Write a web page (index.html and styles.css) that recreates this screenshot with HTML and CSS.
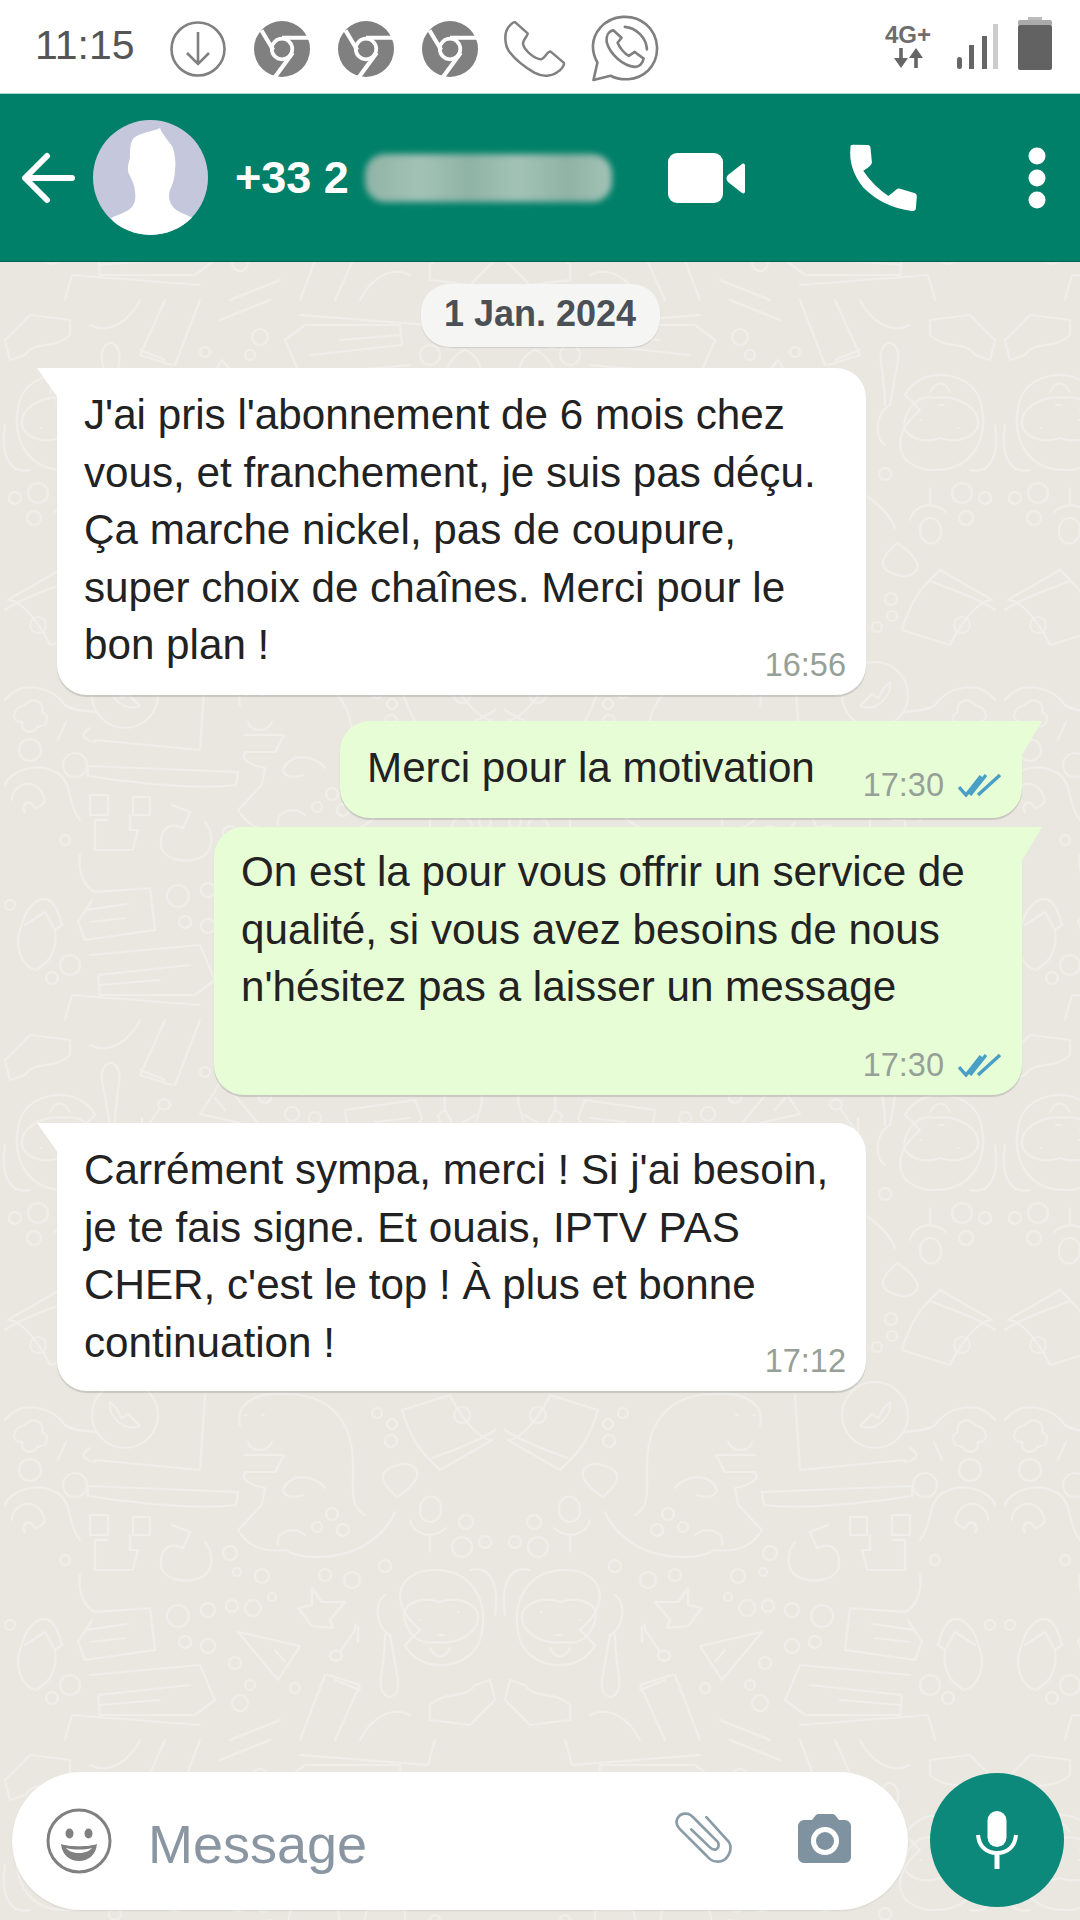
FILE: index.html
```html
<!DOCTYPE html>
<html lang="fr">
<head>
<meta charset="utf-8">
<title>WhatsApp</title>
<link rel="stylesheet" href="styles.css">
</head>
<body>
<div class="phone">
  <div class="status">
    <span class="clock">11:15</span>
    <div class="notifs">
      <svg class="n-dl" viewBox="0 0 56 56"><circle cx="28" cy="28" r="26.5" fill="none" stroke="#808080" stroke-width="2.6"/><path d="M28 11V43M17 32L28 43L39 32" fill="none" stroke="#808080" stroke-width="2.6"/></svg>
      <svg class="n-ch" viewBox="0 0 60 60"><use href="#chrome"/></svg>
      <svg class="n-ch" viewBox="0 0 60 60"><use href="#chrome"/></svg>
      <svg class="n-ch" viewBox="0 0 60 60"><use href="#chrome"/></svg>
      <svg class="n-ph" viewBox="74 61 186 172"><path d="M108 67L145 100C148 104 130 120 131 132C135 150 165 178 185 178C195 178 205 152 214 155L253 188C256 192 250 205 240 212C220 230 190 232 165 218C135 200 105 175 90 155C75 135 75 100 85 85C92 75 100 65 108 67Z" fill="none" stroke="#808080" stroke-width="7.5" stroke-linejoin="round"/></svg>
      <svg class="n-wa" viewBox="333 46 205 203"><path d="M352 190L340 243L392 230C420 245 470 248 505 215C545 175 540 110 500 75C460 40 395 45 360 85C330 120 335 160 352 190Z" fill="none" stroke="#808080" stroke-width="8" stroke-linejoin="round"/><path d="M435 82C470 85 500 115 502 150" fill="none" stroke="#808080" stroke-width="8" stroke-linecap="round"/><path d="M400 92C385 95 378 110 380 128C390 165 430 200 465 203C480 205 490 190 492 178L465 158L447 170C430 160 420 145 413 130L425 115Z" fill="none" stroke="#808080" stroke-width="8" stroke-linejoin="round"/></svg>
    </div>
    <div class="sys">
      <div class="net">
        <span class="net-label">4G+</span>
        <svg class="net-arrows" viewBox="0 0 34 20"><path d="M10 0V14M25 20V6" fill="none" stroke="#666" stroke-width="3.6"/><path d="M3 10H17L10 20ZM18 10H32L25 0Z" fill="#666"/></svg>
      </div>
      <svg class="signal" viewBox="0 0 44 46"><rect x="2" y="33" width="5" height="12" rx="2.5" fill="#666"/><rect x="14" y="21" width="5" height="24" fill="#666"/><rect x="27" y="12" width="5" height="33" fill="#666"/><rect x="38" y="0" width="5" height="45" fill="#ccc"/></svg>
      <svg class="battery" viewBox="0 0 34 53"><rect x="10" y="0" width="14" height="4" fill="#bbb"/><rect x="0" y="3" width="34" height="6" rx="2" fill="#aaa"/><rect x="0" y="8" width="34" height="45" rx="2" fill="#626262"/></svg>
    </div>
  </div>

  <header class="bar">
    <svg class="back" viewBox="0 0 56 54"><path d="M52 27H6M27 5L5 27L27 49" fill="none" stroke="#fff" stroke-width="6" stroke-linecap="round" stroke-linejoin="round"/></svg>
    <div class="avatar">
      <svg viewBox="0 0 115 115"><path d="M67 8C62 11 50 12 42 17C37 20 37 30 37 38C35 44 34 50 36 54C39 60 42 66 42 72C43 78 42 84 38 88C34 92 27 94 18 98L30 115H86L100 98C92 94 84 92 80 87C76 82 75 76 77 70C80 64 82 56 82 50C83 42 82 34 80 28C77 22 70 16 67 8Z" fill="#fff"/></svg>
    </div>
    <div class="who">
      <span class="num">+33 2</span>
      <span class="blur"></span>
    </div>
    <div class="actions">
      <svg class="ic-video" viewBox="0 0 77 50"><rect x="0" y="0" width="55" height="50" rx="9" fill="#fff"/><path d="M60 22L74 11C76 10 77 11 77 13V38C77 40 76 41 74 40L60 29C58 27 58 24 60 22Z" fill="#fff"/></svg>
      <svg class="ic-call" viewBox="625 75 205 200"><path d="M632 85Q630 78 640 77L685 78Q692 80 692 90L696 130Q695 140 670 155Q700 200 745 230L770 210Q775 205 785 210L825 222Q830 225 830 232L827 268Q825 275 815 275Q730 265 670 205Q625 150 632 85Z" fill="#fff"/></svg>
      <svg class="ic-more" viewBox="0 0 18 62"><circle cx="9" cy="9" r="8.5" fill="#fff"/><circle cx="9" cy="31" r="8.5" fill="#fff"/><circle cx="9" cy="53" r="8.5" fill="#fff"/></svg>
    </div>
  </header>

  <main class="chat">
    <svg class="wall" width="100%" height="100%">
      <defs>
        <g id="chrome">
          <circle cx="30" cy="30" r="30" fill="#808080"/>
          <circle cx="30" cy="30" r="11" fill="#808080" stroke="#fff" stroke-width="4"/>
          <path d="M30 18H60M8 10L20.6 31M41.5 34L22.5 60" stroke="#fff" stroke-width="4.4" fill="none"/>
        </g>
        <g id="tile" fill="none" stroke="#f0eeea" stroke-width="2.2" stroke-linejoin="round" stroke-linecap="round">
          <path d="M5 40C20 20 50 25 65 45C75 52 85 50 95 52"/>
          <path d="M25 45C32 36 45 42 42 52C50 54 48 68 38 66C34 76 20 72 22 62C10 62 12 48 25 45Z"/>
          <circle cx="30" cy="90" r="11"/><circle cx="75" cy="105" r="12"/><path d="M66 62L58 80"/>
          <path d="M205 15L200 90L95 80"/><path d="M90 68C80 74 82 80 95 82"/>
          <path d="M88 106L238 112L236 125C190 130 130 122 88 116Z"/>
          <circle cx="125" cy="35" r="33"/><path d="M110 22C108 38 125 52 140 46L128 34L122 38L116 28Z"/>
          <path d="M240 45C235 25 255 10 290 14C330 16 348 40 352 70C356 100 346 125 365 135"/>
          <path d="M248 62C250 72 266 74 272 62M245 35h2M262 35h2"/>
          <path d="M245 75H284L275 92H245C240 100 250 105 265 108L262 125L238 150C250 170 270 172 285 170C300 180 340 180 365 165C380 155 390 145 395 132"/>
          <path d="M283 110C290 92 315 95 325 108M283 110C285 118 295 118 303 115"/>
          <path d="M278 165C275 150 295 146 305 155"/>
          <circle cx="332" cy="134" r="6"/><circle cx="317" cy="147" r="5"/><circle cx="343" cy="150" r="6"/>
          <circle cx="377" cy="33" r="5"/><circle cx="392" cy="44" r="5"/><circle cx="391" cy="61" r="6"/>
          <path d="M402 30L450 15C462 40 480 60 492 60L440 90L430 80C415 65 408 50 402 30ZM432 78C455 70 480 60 495 50"/>
          <circle cx="462" cy="35" r="8"/>
          <path d="M397 117C378 100 378 90 398 85C405 82 420 85 417 97C412 107 405 112 397 117Z"/>
          <path d="M420 130C420 112 442 112 441 130C441 145 420 147 420 130ZM410 140C412 152 430 162 446 148M430 155V172"/>
          <circle cx="466" cy="142" r="7"/><circle cx="462" cy="167" r="10"/><circle cx="485" cy="162" r="6"/>
          <path d="M5 125C10 110 40 100 60 115C72 125 68 145 80 160"/>
          <path d="M12 140C12 125 30 118 40 130C48 140 45 145 35 148C28 135 20 148 25 152"/>
          <path d="M90 135H108V155H90ZM133 137H150V155H133ZM108 160H95V190H133L138 170H130V155"/>
          <path d="M172 145L190 152L183 168C165 160 158 175 162 190C168 200 190 205 205 195C215 185 212 170 205 162"/>
          <circle cx="230" cy="173" r="7"/><circle cx="237" cy="192" r="4"/><circle cx="262" cy="196" r="7"/>
          <circle cx="65" cy="180" r="5"/>
          <path d="M80 195C78 210 82 225 95 232L150 228L155 270L85 280L78 262L92 240"/>
          <path d="M85 250L128 244M90 262L125 258"/>
          <circle cx="178" cy="236" r="11"/><circle cx="208" cy="230" r="7"/><circle cx="232" cy="226" r="6"/><circle cx="253" cy="228" r="8"/><circle cx="272" cy="217" r="4"/>
          <circle cx="185" cy="262" r="6"/><circle cx="208" cy="266" r="7"/>
          <path d="M312 208L322 222L345 222L330 240L333 248L312 246L298 228L312 225Z"/>
          <circle cx="325" cy="195" r="6"/><circle cx="352" cy="200" r="8"/><circle cx="385" cy="186" r="6"/>
          <path d="M238 252L300 266L278 300ZM275 270L285 282"/>
          <path d="M340 272L355 250V244M340 272a6 5 0 1 0 1 1M358 262V246"/>
          <circle cx="235" cy="283" r="6"/><circle cx="250" cy="305" r="5"/><circle cx="240" cy="323" r="8"/><circle cx="295" cy="308" r="5"/>
          <path d="M25 255C40 230 55 235 62 265L55 270C58 290 48 305 35 310C20 305 15 285 20 270Z"/>
          <path d="M25 265L45 252L55 270"/>
          <circle cx="70" cy="305" r="10"/><circle cx="52" cy="318" r="6"/><circle cx="10" cy="245" r="5"/>
          <path d="M90 295L200 285L215 320L195 335L100 335L98 315L190 305M100 325L160 320"/>
          <path d="M65 360L72 335L200 345M280 340L230 360"/>
          <path d="M328 295L360 305L335 360M325 295L300 360M335 300L360 310"/>
          <path d="M420 250C385 220 400 190 435 190C475 190 490 225 480 260C470 290 420 295 405 265Z"/>
          <path d="M405 240C400 225 420 215 440 222C460 215 480 225 478 240C475 255 455 265 435 262C420 265 408 255 405 240Z"/>
          <path d="M430 268C435 278 445 280 450 268M420 240h1M458 232h1M438 255h6"/>
          <path d="M385 215C372 225 378 250 390 255L398 300C400 315 390 320 385 315C375 305 385 290 385 255"/>
          <path d="M470 190C490 185 500 205 495 235"/>
          <path d="M430 325C445 310 465 320 475 305L490 300L495 320L470 345L430 340Z"/>
          <path d="M360 360C370 340 390 325 410 335"/>
        </g>
        <pattern id="doodles" x="0" y="398" width="1000" height="720" patternUnits="userSpaceOnUse">
          <use href="#tile"/>
          <use href="#tile" transform="translate(1000,0) scale(-1,1)"/>
          <use href="#tile" transform="translate(500,720) scale(-1,-1)"/>
          <use href="#tile" transform="translate(500,720) scale(1,-1)"/>
        </pattern>
      </defs>
      <rect width="100%" height="100%" fill="url(#doodles)"/>
    </svg>

    <div class="thread">
      <div class="date">1 Jan. 2024</div>

      <div class="msg in m1">
        <p>J'ai pris l'abonnement de 6 mois chez<br>vous, et franchement, je suis pas déçu.<br>Ça marche nickel, pas de coupure,<br>super choix de chaînes. Merci pour le<br>bon plan !</p>
        <span class="meta">16:56</span>
      </div>

      <div class="msg out m2">
        <p>Merci pour la motivation</p>
        <span class="meta">17:30 <svg class="ticks" viewBox="0 0 44 24"><use href="#ticks-path"/></svg></span>
      </div>

      <div class="msg out m3">
        <p>On est la pour vous offrir un service de<br>qualité, si vous avez besoins de nous<br>n'hésitez pas a laisser un message</p>
        <span class="meta">17:30 <svg class="ticks" viewBox="0 0 44 24"><use href="#ticks-path"/></svg></span>
      </div>

      <div class="msg in m4">
        <p>Carrément sympa, merci ! Si j'ai besoin,<br>je te fais signe. Et ouais, IPTV PAS<br>CHER, c'est le top ! À plus et bonne<br>continuation !</p>
        <span class="meta">17:12</span>
      </div>
    </div>

    <svg class="defs"><defs><path id="ticks-path" d="M1 14L8 22L23 3M12 22L28 2M20 22L42 2" fill="none" stroke="#4a9fc6" stroke-width="3.4"/></defs></svg>

    <footer class="composer">
      <div class="field">
        <svg class="ic-emoji" viewBox="0 0 66 66"><circle cx="33" cy="33" r="31" fill="none" stroke="#808080" stroke-width="3"/><ellipse cx="23.5" cy="25.5" rx="4" ry="5" fill="#808080"/><ellipse cx="42.5" cy="25.5" rx="4" ry="5" fill="#808080"/><path d="M15 36C22 39 44 39 51 36C50 47 42 53 33 53C24 53 16 47 15 36Z" fill="#808080"/><path d="M20 40C28 42 38 42 46 40C44 43 38 45 33 45C28 45 22 43 20 40Z" fill="#fff"/></svg>
        <span class="placeholder">Message</span>
        <svg class="ic-clip" viewBox="70 65 180 165"><path d="M170 85L238 160C250 180 235 222 200 218C190 218 180 212 170 200L90 120C70 100 85 70 115 75C125 78 130 85 140 95L205 160C212 180 195 190 180 175L125 122" fill="none" stroke="#8a9ca8" stroke-width="8" stroke-linecap="round"/></svg>
        <svg class="ic-cam" viewBox="0 0 53 49"><path d="M6 6H14L18 1C19 0 20 0 21 0H34C35 0 36 0 37 1L41 6H47C50 6 53 9 53 12V43C53 46 50 49 47 49H6C3 49 0 46 0 43V12C0 9 3 6 6 6Z" fill="#7f929f"/><circle cx="27" cy="27" r="14" fill="#fff"/><circle cx="27" cy="27" r="9" fill="#7f929f"/></svg>
      </div>
      <div class="mic">
        <svg viewBox="0 0 42 58"><rect x="11.5" y="0" width="19" height="36" rx="9.5" fill="#fff"/><path d="M2 24C3 36 11 42 21 42C31 42 39 36 40 24" fill="none" stroke="#fff" stroke-width="4"/><path d="M21 42V58" stroke="#fff" stroke-width="5"/></svg>
      </div>
    </footer>
  </main>
</div>
</body>
</html>
```

FILE: styles.css
```css
* { box-sizing: border-box; }
html, body { margin: 0; padding: 0; }
body { font-family: "Liberation Sans", Arial, sans-serif; background: #fff; }

.phone { width: 1080px; height: 1920px; display: flex; flex-direction: column; overflow: hidden; }

/* status bar */
.status { height: 94px; flex: none; background: #fff; border-bottom: 1px solid #a3d8cf; display: flex; align-items: center; padding: 0 28px 0 35px; }
.clock { font-size: 41px; color: #555; width: 135px; margin-top: -3px; }
.notifs { display: flex; align-items: center; gap: 28px; margin-top: 5px; }
.notifs svg { display: block; }
.n-dl { width: 56px; height: 56px; }
.n-ch { width: 56px; height: 56px; }
.n-ph { width: 62px; height: 58px; margin-left: -2px; }
.n-wa { width: 68px; height: 67px; margin-left: -3px; margin-top: -2px; }
.sys { margin-left: auto; display: flex; align-items: flex-start; }
.net { display: flex; flex-direction: column; align-items: center; width: 46px; margin-top: 1px; }
.net-label { font-size: 24px; line-height: 22px; font-weight: 700; color: #6e6e6e; }
.net-arrows { width: 34px; height: 20px; display: block; margin-top: 2px; }
.signal { width: 44px; height: 46px; display: block; margin: 1px 0 0 24px; }
.battery { width: 34px; height: 53px; display: block; margin: -6px 0 0 19px; }

/* app bar */
.bar { height: 168px; flex: none; background: #008069; border-bottom: 1px solid #00634f; display: flex; align-items: center; padding: 0 0 0 20px; }
.back { width: 56px; height: 54px; display: block; }
.avatar { width: 115px; height: 115px; border-radius: 50%; background: #c5c8dc; margin-left: 17px; overflow: hidden; flex: none; }
.avatar svg { width: 115px; height: 115px; display: block; }
.who { display: flex; align-items: center; margin-left: 27px; width: 433px; }
.num { color: #fff; font-weight: 700; font-size: 45px; }
.blur { display: block; width: 247px; height: 48px; margin-left: 16px; border-radius: 20px; background: linear-gradient(90deg, #8fb3a6, #a3c2b6 22%, #8fb3a6 42%, #a3c2b6 62%, #8fb3a6 82%, #a3c2b6); filter: blur(3px); }
.actions { display: flex; align-items: center; }
.ic-video { width: 77px; height: 50px; display: block; }
.ic-call { width: 69px; height: 67px; display: block; margin-left: 103px; }
.ic-more { width: 18px; height: 62px; display: block; margin-left: 111px; }

/* chat */
.chat { flex: 1; position: relative; background: #e9e7e0; display: flex; flex-direction: column; justify-content: space-between; }
.wall { position: absolute; inset: 0; display: block; }
.defs { position: absolute; width: 0; height: 0; }
.thread { position: relative; display: flex; flex-direction: column; padding-top: 22px; }
.date { align-self: center; width: 239px; height: 63px; line-height: 60px; text-align: center; border-radius: 28px; background: #f5f5f3; color: #4a5056; font-weight: 700; font-size: 36px; box-shadow: 0 1px 1px rgba(0,0,0,.12); }

.msg { position: relative; border-radius: 30px; box-shadow: 0 2px 1px rgba(0,0,0,.14); padding: 18px 26px 0 27px; }
.msg p { margin: 0; font-size: 42.2px; line-height: 57.5px; color: #222; }
.msg::before { content: ""; position: absolute; top: 0; width: 30px; height: 34px; }

.in { background: #fff; width: 809px; margin-left: 57px; border-top-left-radius: 0; }
.in::before { left: -20px; background: #fff; clip-path: polygon(0 0, 100% 0, 100% 100%, 68% 85%); }
.out { background: #e7fdd6; margin-left: auto; margin-right: 58px; border-top-right-radius: 0; }
.out::before { right: -20px; background: #e7fdd6; clip-path: polygon(0 0, 100% 0, 33% 100%, 0 100%); }

.m1 { margin-top: 21px; height: 327px; }
.m2 { margin-top: 26px; width: 682px; height: 97px; padding-top: 18px; }
.m3 { margin-top: 9px; width: 808px; height: 268px; padding-top: 16px; }
.m4 { margin-top: 28px; height: 268px; }
.m2 .meta { bottom: 15px; }

.meta { position: absolute; right: 20px; bottom: 12px; display: flex; align-items: center; gap: 14px; font-size: 32.5px; line-height: 36px; color: #97a097; }
.ticks { width: 44px; height: 24px; display: block; }

/* composer */
.composer { position: relative; display: flex; align-items: center; gap: 22px; padding: 0 15px 10px 12px; }
.field { width: 896px; height: 138px; border-radius: 69px; background: #fff; display: flex; align-items: center; padding: 0 0 0 34px; box-shadow: 0 1px 2px rgba(0,0,0,.08); }
.ic-emoji { width: 66px; height: 66px; display: block; flex: none; }
.placeholder { font-size: 54px; color: #8a97a3; margin-left: 36px; width: 306px; flex: none; margin-top: 6px; }
.ic-clip { width: 60px; height: 56px; display: block; margin-left: 219px; margin-top: -6px; }
.ic-cam { width: 53px; height: 49px; display: block; margin-left: 65px; margin-top: -6px; }
.mic { width: 134px; height: 134px; border-radius: 50%; background: #0c897a; display: flex; align-items: center; justify-content: center; flex: none; margin-top: -2px; }
.mic svg { width: 42px; height: 58px; display: block; }
```
